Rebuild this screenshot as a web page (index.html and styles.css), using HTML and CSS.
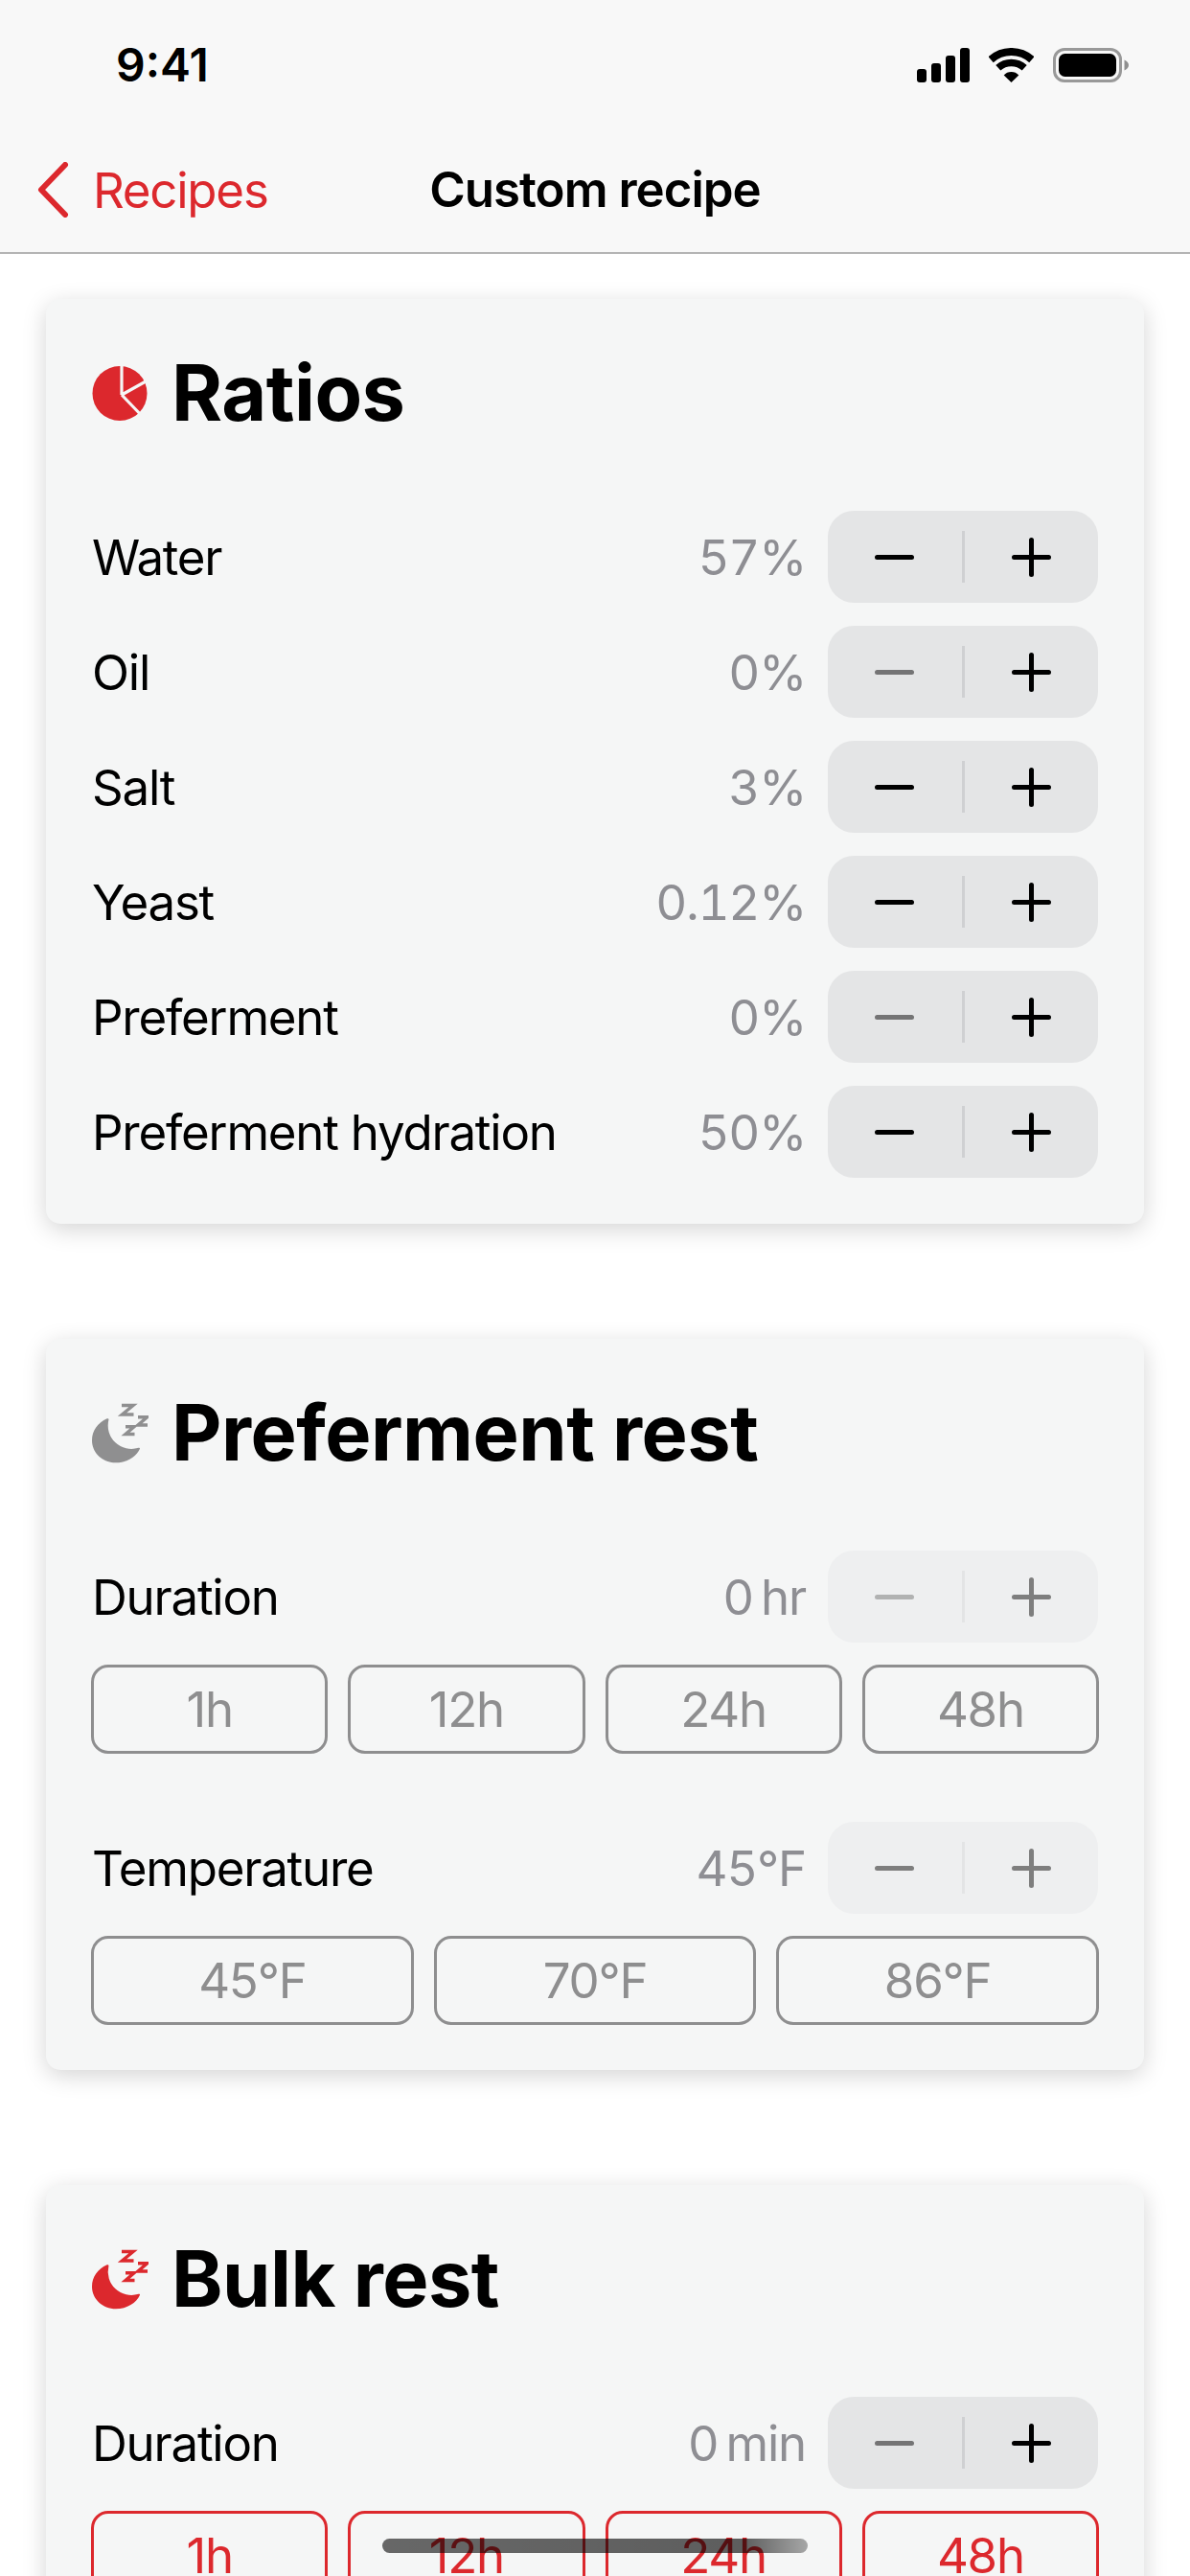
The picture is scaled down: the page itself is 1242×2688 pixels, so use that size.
FILE: index.html
```html
<!DOCTYPE html>
<html lang="en">
<head>
<meta charset="utf-8">
<title>Custom recipe</title>
<link rel="stylesheet" href="styles.css">
</head>
<body>
<svg class="defs" width="0" height="0" aria-hidden="true">
  <symbol id="i-minus" viewBox="0 0 41 41"><path d="M2.5 20.5H38.5" fill="none" stroke="currentColor" stroke-width="5" stroke-linecap="round"/></symbol>
  <symbol id="i-plus" viewBox="0 0 41 41"><path d="M2.5 20.5H38.5M20.5 2.5V38.5" fill="none" stroke="currentColor" stroke-width="5" stroke-linecap="round"/></symbol>
  <symbol id="i-moon" viewBox="0 0 59 64">
    <path d="M15.7 17.3C6 21.5 0 30 0 40C0 53 11 63.3 25 63.3C36.5 63.3 46.5 57 50 48.8C50.2 47.8 49.5 47.4 48.5 47.8A24.5 24.5 0 0 1 17.4 18.6C17.7 17.5 16.8 16.9 15.7 17.3Z" fill="currentColor"/>
    <path d="M31 3.5H43L31.5 13H43.5M48 15.8H57.5L48 24H58M35 25.8H44L35 33.5H44.5" fill="none" stroke="currentColor" stroke-width="3.4"/>
  </symbol>
</svg>
<div class="screen">
  <header class="topbar">
    <div class="status">
      <span class="time">9:41</span>
      <div class="status-icons">
        <svg class="sig" viewBox="0 0 55 36" width="55" height="36"><g fill="#000"><rect x="0" y="22" width="10" height="14" rx="3"/><rect x="15" y="16" width="10" height="20" rx="3"/><rect x="30" y="8" width="10" height="28" rx="3"/><rect x="45" y="0" width="10" height="36" rx="3"/></g></svg>
        <svg class="wifi" viewBox="0 0 47 36" width="47" height="36"><path d="M2.1 12.2A32 32 0 0 1 44.9 12.2" fill="none" stroke="#000" stroke-width="8"/><path d="M9.8 20.8A20.5 20.5 0 0 1 37.2 20.8" fill="none" stroke="#000" stroke-width="7.5"/><path d="M23.5 36L15.7 28.5A10.5 10.5 0 0 1 31.3 28.5Z" fill="#000"/></svg>
        <svg class="batt" viewBox="0 0 79 36" width="79" height="36"><rect x="1.5" y="1.5" width="69" height="33" rx="10.5" fill="none" stroke="#999" stroke-width="3"/><rect x="6" y="6" width="60" height="24" rx="6.5" fill="#000"/><path d="M74.5 12.5C77 13.5 79 15.5 79 18S77 22.5 74.5 23.5Z" fill="#8f8f8f"/></svg>
      </div>
    </div>
    <nav class="nav">
      <a class="back"><svg class="chev" viewBox="0 0 34 58" width="34" height="58"><path d="M30 3L5 29L30 55" fill="none" stroke="currentColor" stroke-width="6" stroke-linecap="round" stroke-linejoin="round"/></svg><span>Recipes</span></a>
      <h1 class="nav-title">Custom recipe</h1>
    </nav>
  </header>

  <main class="content">
    <section class="card">
      <h2 class="card-title">
        <svg class="card-icon red" viewBox="0 0 59 57" width="59" height="57"><circle cx="29" cy="28.5" r="28.5" fill="currentColor"/><path d="M31 30V-3M31 30L62 12.7M31 30L55 55" fill="none" stroke="#f5f6f6" stroke-width="3.2"/></svg>
        Ratios
      </h2>
      <div class="rows">
        <div class="row"><span class="label">Water</span><span class="value">57%</span><div class="stepper"><span class="step"><svg class="glyph"><use href="#i-minus"/></svg></span><i class="sep"></i><span class="step"><svg class="glyph"><use href="#i-plus"/></svg></span></div></div>
        <div class="row"><span class="label">Oil</span><span class="value">0%</span><div class="stepper"><span class="step off"><svg class="glyph"><use href="#i-minus"/></svg></span><i class="sep"></i><span class="step"><svg class="glyph"><use href="#i-plus"/></svg></span></div></div>
        <div class="row"><span class="label">Salt</span><span class="value">3%</span><div class="stepper"><span class="step"><svg class="glyph"><use href="#i-minus"/></svg></span><i class="sep"></i><span class="step"><svg class="glyph"><use href="#i-plus"/></svg></span></div></div>
        <div class="row"><span class="label">Yeast</span><span class="value">0.12%</span><div class="stepper"><span class="step"><svg class="glyph"><use href="#i-minus"/></svg></span><i class="sep"></i><span class="step"><svg class="glyph"><use href="#i-plus"/></svg></span></div></div>
        <div class="row"><span class="label">Preferment</span><span class="value">0%</span><div class="stepper"><span class="step off"><svg class="glyph"><use href="#i-minus"/></svg></span><i class="sep"></i><span class="step"><svg class="glyph"><use href="#i-plus"/></svg></span></div></div>
        <div class="row"><span class="label">Preferment hydration</span><span class="value">50%</span><div class="stepper"><span class="step"><svg class="glyph"><use href="#i-minus"/></svg></span><i class="sep"></i><span class="step"><svg class="glyph"><use href="#i-plus"/></svg></span></div></div>
      </div>
    </section>

    <section class="card">
      <h2 class="card-title">
        <svg class="card-icon grey" width="59" height="64"><use href="#i-moon"/></svg>
        Preferment rest
      </h2>
      <div class="groups">
        <div class="group">
          <div class="row"><span class="label">Duration</span><span class="value">0&#8201;hr</span><div class="stepper muted"><span class="step off"><svg class="glyph"><use href="#i-minus"/></svg></span><i class="sep"></i><span class="step"><svg class="glyph"><use href="#i-plus"/></svg></span></div></div>
          <div class="chips four grey-chips"><span class="chip">1h</span><span class="chip">12h</span><span class="chip">24h</span><span class="chip">48h</span></div>
        </div>
        <div class="group">
          <div class="row"><span class="label">Temperature</span><span class="value">45°F</span><div class="stepper muted"><span class="step"><svg class="glyph"><use href="#i-minus"/></svg></span><i class="sep"></i><span class="step"><svg class="glyph"><use href="#i-plus"/></svg></span></div></div>
          <div class="chips three grey-chips"><span class="chip">45°F</span><span class="chip">70°F</span><span class="chip">86°F</span></div>
        </div>
      </div>
    </section>

    <section class="card">
      <h2 class="card-title">
        <svg class="card-icon red" width="59" height="64"><use href="#i-moon"/></svg>
        Bulk rest
      </h2>
      <div class="groups">
        <div class="group">
          <div class="row"><span class="label">Duration</span><span class="value">0&#8201;min</span><div class="stepper"><span class="step off"><svg class="glyph"><use href="#i-minus"/></svg></span><i class="sep"></i><span class="step"><svg class="glyph"><use href="#i-plus"/></svg></span></div></div>
          <div class="chips four red-chips"><span class="chip">1h</span><span class="chip">12h</span><span class="chip">24h</span><span class="chip">48h</span></div>
        </div>
      </div>
    </section>
  </main>
  <div class="home-indicator"></div>
</div>
</body>
</html>
```
FILE: styles.css
```css
* { box-sizing: border-box; }
html, body { margin: 0; padding: 0; background: #fff; }
body { font-family: Inter, "Noto Sans", sans-serif; color: #000; }
.defs { position: absolute; }
.screen { position: relative; width: 1242px; height: 2688px; overflow: hidden; background: #fff; }

.topbar { height: 265px; background: #f8f8f8; border-bottom: 2px solid #b4b4b4; }
.status { height: 136px; display: flex; align-items: center; justify-content: space-between; padding: 0 64px 0 121px; }
.time { font-size: 48px; font-weight: 600; line-height: 1; }
.status-icons { display: flex; align-items: center; gap: 20px; }
.nav { height: 124px; display: grid; grid-template-columns: 1fr auto 1fr; align-items: center; }
.back { display: flex; align-items: center; gap: 25px; padding-left: 38px; color: #dc282d; font-size: 51px; letter-spacing: -1.23px; }
.chev { flex: none; }
.nav-title { grid-column: 2; margin: 0; font-size: 51px; font-weight: 600; line-height: 1.2; letter-spacing: -1px; }

.content { display: flex; flex-direction: column; gap: 120px; padding: 47px 48px 0; }
.card { background: #f5f6f6; border-radius: 15px; padding: 48px; box-shadow: 0 6px 24px rgba(0, 0, 0, .17); }
.card-title { display: flex; align-items: center; gap: 24px; height: 100px; margin: 0 0 73px; font-size: 81px; font-weight: 700; line-height: 100px; letter-spacing: -.5px; }
.card-icon { flex: none; }
.red { color: #dc282d; }
.grey { color: #8f8f90; }

.rows { display: flex; flex-direction: column; gap: 24px; }
.groups { display: flex; flex-direction: column; gap: 71px; margin-bottom: -1px; }
.row { display: flex; align-items: center; height: 96px; font-size: 51px; letter-spacing: -1.23px; }
.label { flex: 1; }
.value { color: #8e8e93; margin-right: 23px; font-feature-settings: "tnum"; }

.stepper { flex: none; display: flex; align-items: center; width: 282px; height: 96px; background: #e4e5e6; border-radius: 27px; color: #000; }
.step { flex: 1; display: flex; align-items: center; justify-content: center; }
.step.off { color: #747475; }
.glyph { width: 41px; height: 41px; display: block; }
.sep { flex: none; width: 3px; height: 54px; background: #cfd0d2; }
.stepper.muted { background: #eeeff0; color: #7e7e7e; }
.stepper.muted .step.off { color: #b1b2b2; }
.stepper.muted .sep { background: #e3e4e5; }

.chips { display: grid; gap: 21px; margin: 23px -1px 0; }
.chips.four { grid-template-columns: repeat(4, 1fr); }
.chips.three { grid-template-columns: repeat(3, 1fr); }
.chip { display: flex; align-items: center; justify-content: center; height: 93px; border: 3px solid; border-radius: 18px; font-size: 51px; letter-spacing: -1.23px; }
.grey-chips .chip { color: #8e8e8f; border-color: #8e8e8f; }
.red-chips .chip { color: #dc282d; border-color: #dc282d; }

.home-indicator { position: absolute; left: 399px; top: 2649px; width: 444px; height: 15px; border-radius: 8px; background: linear-gradient(90deg, rgba(0,0,0,.58) 0%, rgba(0,0,0,.62) 85%, rgba(0,0,0,.32) 100%); }
```
